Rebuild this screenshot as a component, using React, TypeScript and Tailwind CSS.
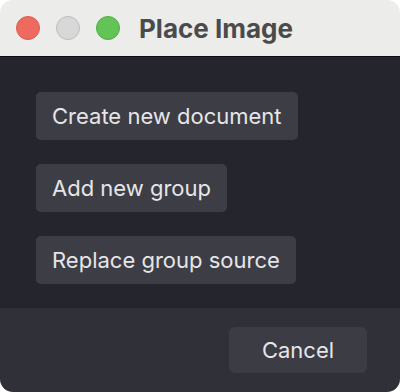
export default function App() {
  const actions = ['Create new document', 'Add new group', 'Replace group source'];

  return (
    <div className="h-[392px] w-[400px] bg-white">
      <div className="flex h-full flex-col overflow-hidden rounded-[13px] font-['Inter',sans-serif]">
        <div className="flex h-[56px] shrink-0 items-center bg-[#ececeb] pl-4">
          <div className="flex gap-4">
            <span className="h-6 w-6 rounded-full border border-[#e05a50] bg-[#ee6a5f]" />
            <span className="h-6 w-6 rounded-full border border-[#bdbdbd] bg-[#d8d8d8]" />
            <span className="h-6 w-6 rounded-full border border-[#4fae44] bg-[#61c454]" />
          </div>
          <h1 className="ml-[19px] text-[26px] font-bold text-[#4b4b4b]">Place Image</h1>
        </div>
        <div className="h-px bg-[#0e0e12]" />
        <div className="flex flex-1 flex-col items-start gap-6 bg-[#25252d] pl-9 pt-[35px]">
          {actions.map((a) => (
            <button
              key={a}
              className="h-12 rounded-[5px] bg-[#3d3d45] px-4 text-[22px] text-[#e6e6e8]"
            >
              {a}
            </button>
          ))}
        </div>
        <div className="flex h-[84px] shrink-0 items-start justify-end bg-[#303038] pr-[33px] pt-[19px]">
          <button className="h-[46px] w-[138px] rounded-[6px] bg-[#3c3c44] text-[22px] text-[#e6e6e8]">
            Cancel
          </button>
        </div>
      </div>
    </div>
  );
}
